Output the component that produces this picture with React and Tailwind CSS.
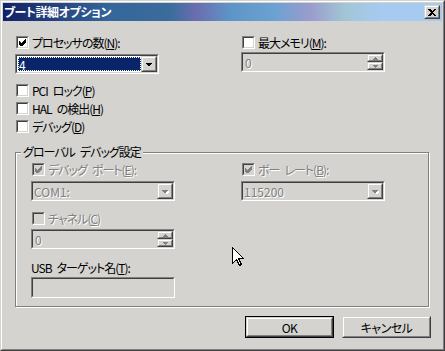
import React from "react";

const FONT = { fontFamily: '"Noto Sans CJK JP", "Liberation Sans", sans-serif' };
const SP = "\u2002";

function Check({ disabled }) {
  return (
    <svg width="7" height="7" viewBox="0 0 7 7" shapeRendering="crispEdges" className="block">
      <path d="M0 2 L2 4 L6 0 L7 0 L7 3 L2 8 L0 5 Z" fill={disabled ? "#808080" : "#000"} />
    </svg>
  );
}

function CheckBox({ checked, disabled }) {
  return (
    <span className="w-[13px] h-[13px] shrink-0 border border-t-[#808080] border-l-[#808080] border-b-white border-r-white flex">
      <span
        className={
          "flex-1 border border-t-[#404040] border-l-[#404040] border-b-[#d4d3d0] border-r-[#d4d3d0] flex items-center justify-center " +
          (disabled ? "bg-[#d4d3d0]" : "bg-white")
        }
      >
        {checked && <Check disabled={disabled} />}
      </span>
    </span>
  );
}

function Label({ children, disabled, jp = true }) {
  return (
    <span
      className={
        "text-[12px] leading-[13px] whitespace-nowrap [font-feature-settings:'palt'] " +
        (jp ? "tracking-[-1px] " : "") +
        (disabled ? "text-[#808080] [text-shadow:1px_1px_0_#fff]" : "text-black")
      }
    >
      {children}
    </span>
  );
}

function CheckRow({ checked, disabled, children }) {
  return (
    <div className="flex items-center h-[13px] pl-[1px] gap-[3px]">
      <CheckBox checked={checked} disabled={disabled} />
      <Label disabled={disabled}>{children}</Label>
    </div>
  );
}

function Sunken({ children, disabled, className = "" }) {
  return (
    <div
      className={
        "w-[144px] h-[20px] border border-t-[#808080] border-l-[#808080] border-b-white border-r-white flex " +
        className
      }
    >
      <div
        className={
          "flex-1 flex border border-t-[#404040] border-l-[#404040] border-b-[#d4d3d0] border-r-[#d4d3d0] " +
          (disabled ? "bg-[#d4d3d0]" : "bg-white")
        }
      >
        {children}
      </div>
    </div>
  );
}

function Raised({ children, className = "" }) {
  return (
    <div
      className={
        "border border-t-[#d4d3d0] border-l-[#d4d3d0] border-b-[#404040] border-r-[#404040] flex " + className
      }
    >
      <div className="flex-1 flex items-center justify-center bg-[#d4d3d0] border border-t-white border-l-white border-b-[#808080] border-r-[#808080]">
        {children}
      </div>
    </div>
  );
}

function DownTri({ disabled }) {
  return (
    <svg width="8" height="5" viewBox="0 0 8 5" shapeRendering="crispEdges" className="block">
      {disabled && <path d="M2 2 H9 L5.5 5.5 Z" fill="#fff" />}
      <path d="M0.5 0.5 H7.5 L4 4.5 Z" fill={disabled ? "#808080" : "#000"} />
    </svg>
  );
}

function Combo({ value, disabled, selected }) {
  return (
    <Sunken disabled={disabled}>
      <div className="flex-1 flex items-center pl-[1px] py-[1px]">
        {selected ? (
          <div className="flex-1 h-full bg-[#0a246a] outline-1 outline-dotted outline-white -outline-offset-1 flex items-center pl-[1px]">
            <span className="text-[12px] leading-[13px] text-white">{value}</span>
          </div>
        ) : (
          <Label disabled={disabled} jp={false}>{value}</Label>
        )}
      </div>
      <Raised className="w-[16px]">
        <DownTri disabled={disabled} />
      </Raised>
    </Sunken>
  );
}

function SmallTri({ up }) {
  return (
    <svg width="5" height="3" viewBox="0 0 5 3" shapeRendering="crispEdges" className="block">
      <path d={up ? "M2.5 0 L5 3 H0 Z" : "M0 0 H5 L2.5 3 Z"} fill="#808080" />
    </svg>
  );
}

function Spin({ value }) {
  return (
    <Sunken disabled>
      <div className="flex-1 flex items-center pl-[2px]">
        <Label disabled jp={false}>{value}</Label>
      </div>
      <div className="w-[16px] flex flex-col">
        <Raised className="flex-1">
          <SmallTri up />
        </Raised>
        <Raised className="flex-1">
          <SmallTri />
        </Raised>
      </div>
    </Sunken>
  );
}

function Button({ children, isDefault }) {
  const inner = (
    <Raised className="flex-1">
      <span className="text-[12px] leading-[13px] text-black [font-feature-settings:'palt'] tracking-[-0.5px]">{children}</span>
    </Raised>
  );
  return (
    <div className={"w-[89px] h-[22px] flex " + (isDefault ? "border border-black" : "")}>{inner}</div>
  );
}

export default function App() {
  return (
    <div
      className="w-[445px] h-[351px] relative bg-[#d4d3d0] border border-t-[#d4d3d0] border-l-[#d4d3d0] border-b-[#404040] border-r-[#404040] flex"
      style={FONT}
    >
      <div className="flex-1 flex flex-col border border-t-white border-l-white border-b-[#808080] border-r-[#808080] p-[1px]">
        {/* Title bar */}
        <div className="h-[18px] flex items-center pl-[1px] pr-[2px] bg-[linear-gradient(90deg,#102265_0%,#1e3777_8%,#33669a_24%,#3a6c9c_38%,#6a6db0_44%,#5e95c8_52%,#6ca2d2_62%,#9a9ccc_70%,#a2c6d6_78%,#a6caf0_86%,#a6caf0_100%)]">
          <span className="text-[12px] leading-[14px] font-bold text-white whitespace-nowrap tracking-[-0.4px] [font-feature-settings:'palt']">
            ブート詳細オプション
          </span>
          <div className="flex-1" />
          <Raised className="w-[16px] h-[14px]">
            <svg width="8" height="7" viewBox="0 0 8 7" shapeRendering="crispEdges" className="block">
              <path d="M0 0 H2 L4 2 L6 0 H8 L5 3.5 L8 7 H6 L4 5 L2 7 H0 L3 3.5 Z" fill="#000" />
            </svg>
          </Raised>
        </div>

        {/* Body */}
        <div className="flex flex-col pl-[12px]">
          <div className="flex">
            <div className="w-[226px] flex flex-col">
              <div className="mt-[15px]">
                <CheckRow checked>プロセッサの数(<u>N</u>):</CheckRow>
              </div>
              <div className="mt-[5px]">
                <Combo value="4" selected />
              </div>
              <div className="mt-[10px] flex flex-col gap-[5px]">
                <CheckRow>PCI{SP}ロック(<u>P</u>)</CheckRow>
                <CheckRow>HAL{SP}の検出(<u>H</u>)</CheckRow>
                <CheckRow>デバッグ(<u>D</u>)</CheckRow>
              </div>
            </div>
            <div className="flex flex-col">
              <div className="mt-[15px]">
                <CheckRow>最大メモリ(<u>M</u>):</CheckRow>
              </div>
              <div className="mt-[3px]">
                <Spin value="0" />
              </div>
            </div>
          </div>

          {/* Group box */}
          <div className="mt-[19px] w-[414px] h-[155px] relative border border-[#808080] shadow-[inset_1px_1px_0_#fff,1px_1px_0_#fff] flex flex-col pl-[15px] pt-[10px]">
            <span className="absolute left-[5px] top-[-8px] px-[2px] bg-[#d4d3d0] text-[12px] leading-[14px] text-black whitespace-nowrap tracking-[-1px] [font-feature-settings:'palt']">
              グローバル{SP}デバッグ設定
            </span>
            <div className="flex">
              <div className="w-[210px] flex flex-col">
                <CheckRow checked disabled>デバッグ{SP}ポート(<u>E</u>):</CheckRow>
                <div className="mt-[5px]">
                  <Combo value="COM1:" disabled />
                </div>
                <div className="mt-[11px]">
                  <CheckRow disabled>チャネル(<u>C</u>)</CheckRow>
                </div>
                <div className="mt-[4px]">
                  <Spin value="0" />
                </div>
                <div className="mt-[12px] h-[13px] flex items-center">
                  <Label>USB{SP}ターゲット名(<u>T</u>):</Label>
                </div>
                <div className="mt-[3px]">
                  <Sunken disabled className="h-[21px]" />
                </div>
              </div>
              <div className="flex flex-col">
                <CheckRow checked disabled>ボー{SP}レート(<u>B</u>):</CheckRow>
                <div className="mt-[5px]">
                  <Combo value="115200" disabled />
                </div>
              </div>
            </div>
          </div>

          {/* Buttons */}
          <div className="mt-[9px] flex gap-[8px] pl-[230px]">
            <Button isDefault>OK</Button>
            <Button>キャンセル</Button>
          </div>
        </div>
      </div>

      {/* Mouse cursor */}
      <svg
        width="12"
        height="19"
        viewBox="0 0 12 19"
        shapeRendering="crispEdges"
        className="absolute left-[231px] top-[246px]"
      >
        <path d="M0.5 0.5 V16.5 L4.5 12.5 L7.5 18.5 L9.5 17.5 L6.5 11.5 H11.5 Z" fill="#fff" stroke="#000" strokeWidth="1" />
      </svg>
    </div>
  );
}
